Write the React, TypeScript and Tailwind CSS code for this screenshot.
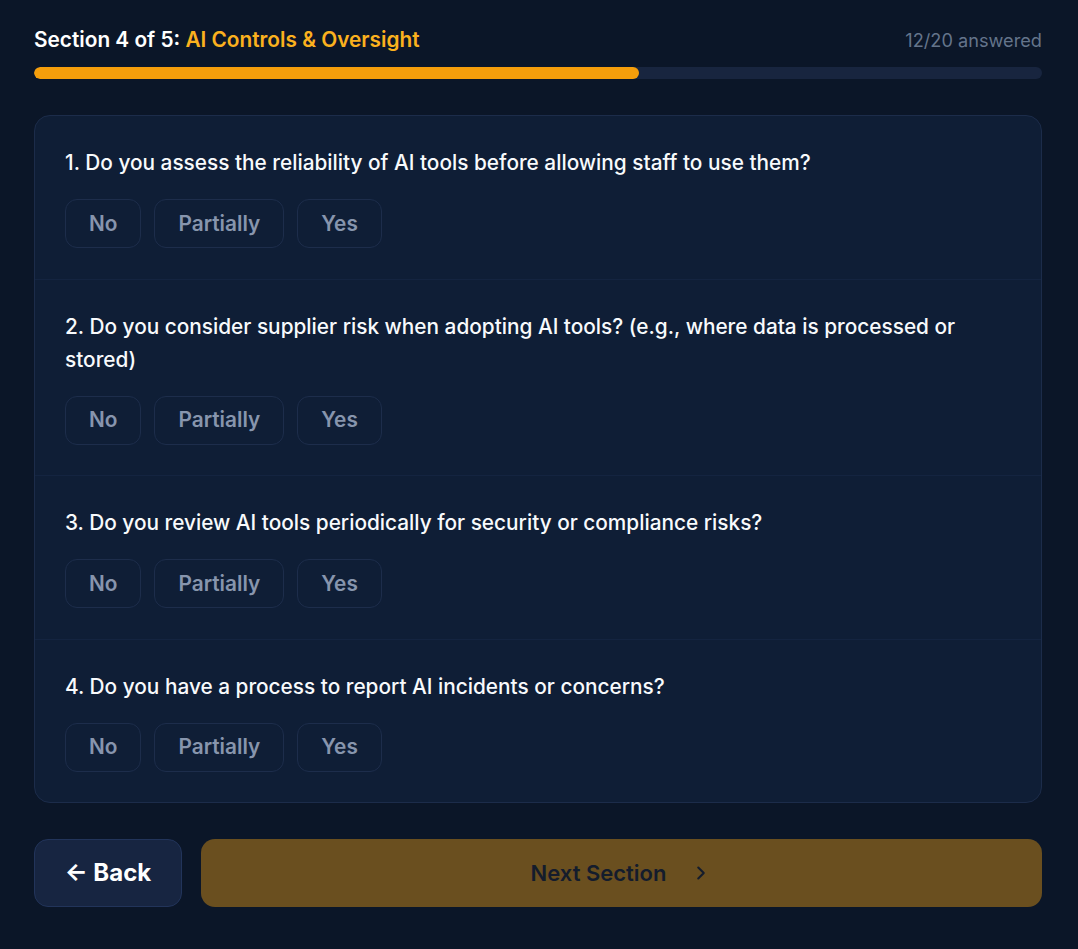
import React from "react";
import { ChevronRight } from "lucide-react";

const questions = [
  "1. Do you assess the reliability of AI tools before allowing staff to use them?",
  "2. Do you consider supplier risk when adopting AI tools? (e.g., where data is processed or stored)",
  "3. Do you review AI tools periodically for security or compliance risks?",
  "4. Do you have a process to report AI incidents or concerns?",
];

const options = ["No", "Partially", "Yes"];

export default function App() {
  return (
    <div
      className="min-h-screen bg-[#0b1628] pl-[34px] pr-[36px] pt-[26px] pb-10"
      style={{ fontFamily: "Inter, 'Noto Sans', sans-serif" }}
    >
      <div className="flex items-center justify-between h-[28px]">
        <div className="text-[20.8px] font-semibold leading-[28px] text-white">
          Section 4 of 5: <span className="text-[#fbb11e]">AI Controls &amp; Oversight</span>
        </div>
        <div className="text-[18.2px] leading-[28px] text-[#64748b]">12/20 answered</div>
      </div>

      <div className="mt-[13px] h-[12px] w-full rounded-full bg-[#18253f] overflow-hidden">
        <div className="h-full w-[60%] rounded-full bg-[#f59e0b]" />
      </div>

      <div className="mt-[36px] rounded-[16px] border border-[#1c2c4a] bg-[#0f1e36]">
        {questions.map((q, i) => (
          <div
            key={i}
            className={
              "px-[30px] pt-[30px] pb-[30.5px] " +
              (i < questions.length - 1 ? "border-b border-[#142440]" : "")
            }
          >
            <div className="text-[20.8px] font-medium leading-[33px] text-[#f8fafc]">{q}</div>
            <div className="mt-[20px] flex gap-[13px]">
              {options.map((o) => (
                <div
                  key={o}
                  className="flex h-[49px] items-center rounded-[12px] border border-[#1d2d4b] bg-[#0f1e36] px-[23px] text-[20.8px] font-semibold text-[#8795ad]"
                >
                  {o}
                </div>
              ))}
            </div>
          </div>
        ))}
      </div>

      <div className="mt-[36px] flex gap-[19px]">
        <div className="flex h-[68px] w-[148px] items-center justify-center rounded-[14px] border border-[#22345a] bg-[#172541] text-[24px] font-bold text-white">
          ← Back
        </div>
        <div className="flex h-[68px] flex-1 items-center justify-center gap-[24px] rounded-[14px] bg-[#6a4f1f] text-[22px] font-semibold text-[#141c2c]">
          <span>Next Section</span>
          <ChevronRight size={22} strokeWidth={2.25} />
        </div>
      </div>
    </div>
  );
}
